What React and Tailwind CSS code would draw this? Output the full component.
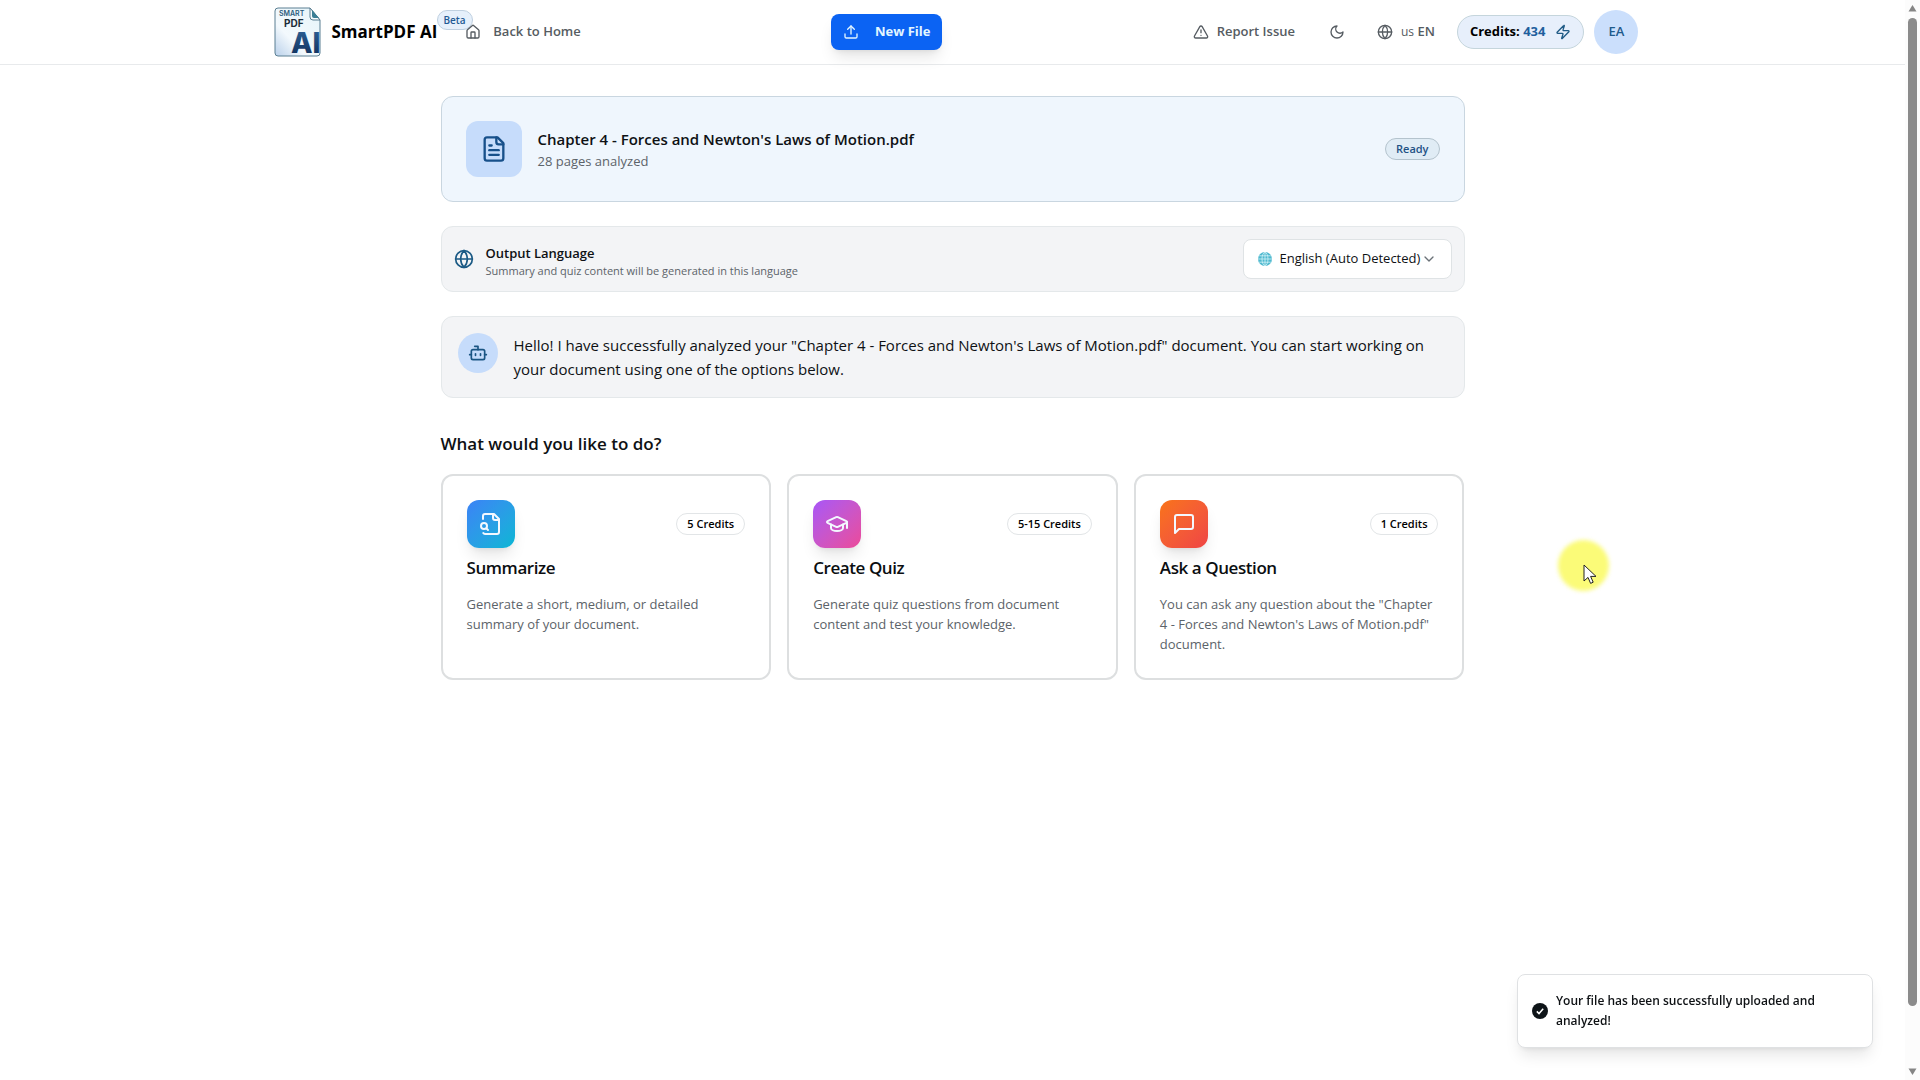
import React, { useState } from 'react';
import { Bot, ChevronDown, Globe, GraduationCap, House, TriangleAlert, Upload, Zap } from 'lucide-react';

const FILE_NAME = "Chapter 4 - Forces and Newton's Laws of Motion.pdf";

const Icon = ({ size = 16, className, children }) => (
  <svg
    width={size}
    height={size}
    viewBox="0 0 24 24"
    fill="none"
    stroke="currentColor"
    strokeWidth="2"
    strokeLinecap="round"
    strokeLinejoin="round"
    className={className}
    aria-hidden="true"
  >
    {children}
  </svg>
);

const MoonIcon = () => (
  <Icon>
    <path d="M12 3a6 6 0 0 0 9 9 9 9 0 1 1-9-9Z" />
  </Icon>
);

const FileTextIcon = () => (
  <Icon size={28}>
    <path d="M15 2H6a2 2 0 0 0-2 2v16a2 2 0 0 0 2 2h12a2 2 0 0 0 2-2V7Z" />
    <path d="M14 2v4a2 2 0 0 0 2 2h4" />
    <path d="M10 9H8" />
    <path d="M16 13H8" />
    <path d="M16 17H8" />
  </Icon>
);

const FileSearchIcon = () => (
  <Icon size={24}>
    <path d="M14 2v4a2 2 0 0 0 2 2h4" />
    <path d="M4.268 21a2 2 0 0 0 1.727 1H18a2 2 0 0 0 2-2V7l-5-5H6a2 2 0 0 0-2 2v3" />
    <path d="m9 18-1.5-1.5" />
    <circle cx="5" cy="14" r="3" />
  </Icon>
);

const MessageIcon = () => (
  <Icon size={24}>
    <path d="M21 15a2 2 0 0 1-2 2H7l-4 4V5a2 2 0 0 1 2-2h14a2 2 0 0 1 2 2z" />
  </Icon>
);

const Logo = () => (
  <svg width="52" height="60" viewBox="0 -4 52 60" aria-hidden="true">
    <defs>
      <linearGradient id="sheet" x1="0" y1="1" x2="1" y2="0">
        <stop offset="0" stopColor="#b9d0ea" />
        <stop offset="0.35" stopColor="#f3f9fd" />
        <stop offset="1" stopColor="#e6f4f9" />
      </linearGradient>
      <linearGradient id="ink" x1="0" y1="0" x2="0" y2="1">
        <stop offset="0" stopColor="#2f669c" />
        <stop offset="1" stopColor="#0c2a55" />
      </linearGradient>
    </defs>
    <path
      d="M4 2h32l10 12v33q0 3-3 3H4q-3 0-3-3V5q0-3 3-3Z"
      fill="url(#sheet)"
      stroke="#5b7f92"
      strokeWidth="1"
    />
    <path d="M36 2v9q0 3 3 3h7Z" fill="#f6fbfd" stroke="#5b7f92" strokeWidth="1" />
    <path d="M38 4v6q0 2 2 2h5Z" fill="#3c7f95" />
    <text x="5" y="10" fontSize="7" fontWeight="600" fontFamily="Inter, sans-serif" fill="#2b5c7c">SMART</text>
    <text x="10" y="21" fontSize="10" fontWeight="700" fontFamily="Inter, sans-serif" fill="#1b2c38">PDF</text>
    <text x="17" y="47" fontSize="28" fontWeight="800" fontFamily="Inter, sans-serif" fill="url(#ink)">AI</text>
  </svg>
);

const GlobeEmoji = () => (
  <svg width="14" height="14" viewBox="0 0 14 14" aria-hidden="true">
    <circle cx="7" cy="7" r="7" fill="#4fb9cf" />
    <g fill="none" stroke="#d3f3f8" strokeWidth="0.8">
      <ellipse cx="7" cy="7" rx="3" ry="6.6" />
      <path d="M7 0v14M0 7h14M1.2 3.8h11.6M1.2 10.2h11.6" />
    </g>
  </svg>
);

const actions = [
  {
    title: 'Summarize',
    credits: '5 Credits',
    text: 'Generate a short, medium, or detailed summary of your document.',
    icon: <FileSearchIcon />,
    color: 'from-[#3b82f6] to-[#06b6d4]',
  },
  {
    title: 'Create Quiz',
    credits: '5-15 Credits',
    text: 'Generate quiz questions from document content and test your knowledge.',
    icon: <GraduationCap size={24} />,
    color: 'from-[#a855f7] to-[#ec4899]',
  },
  {
    title: 'Ask a Question',
    credits: '1 Credits',
    text: `You can ask any question about the "${FILE_NAME}" document.`,
    icon: <MessageIcon />,
    color: 'from-[#f97316] to-[#ef4444]',
  },
];

const Header = () => (
  <header className="border-b border-[#e8eaec] bg-white">
    <div className="mx-auto flex h-16 max-w-[1400px] items-center justify-between pr-[14px] pl-[21px] text-[13px] font-semibold text-[#565c62]">
      <div className="flex items-center">
        <a href="#" className="relative flex items-center gap-[6px] text-black">
          <Logo />
          <span className="text-[17px] font-bold">SmartPDF AI</span>
          <span className="absolute top-2 left-[163px] rounded-full border border-[#bfd0e0] bg-[#e6f0fb] px-[6px] text-[10px] leading-[18px] font-semibold text-[#1f5a94]">
            Beta
          </span>
        </a>
        <a href="#" className="relative ml-7 flex items-center gap-3 pr-2">
          <House size={16} />
          Back to Home
        </a>
      </div>

      <button className="flex h-9 items-center gap-4 rounded-lg bg-[#0b63f3] px-3 font-bold text-[#e3f6ff] shadow-lg">
        <Upload size={16} />
        New File
      </button>

      <div className="flex items-center">
        <button className="flex items-center gap-2 px-2">
          <TriangleAlert size={16} />
          Report Issue
        </button>
        <button className="ml-[18px] p-2" aria-label="Toggle theme">
          <MoonIcon />
        </button>
        <button className="ml-4 flex items-center gap-2 p-2">
          <Globe size={16} />
          <span>
            <span className="text-xs font-normal">us</span> EN
          </span>
        </button>
        <div className="ml-[14px] flex h-[34px] items-center gap-[10px] rounded-full border border-[#c5d5dc] bg-[#e7effb] px-3">
          <span className="font-bold text-black">
            Credits: <span className="text-[#1f5f9e]">434</span>
          </span>
          <Zap size={16} className="text-[#1f5a85]" />
        </div>
        <button className="ml-[10px] size-11 rounded-full bg-[#cbdffc] text-[#1f5a8c]">EA</button>
      </div>
    </div>
  </header>
);

const ActionCard = ({ title, credits, text, icon, color }) => (
  <button className="flex flex-col rounded-xl border-2 border-[#dddfe0] bg-white p-6 text-left">
    <span className="flex w-full items-center justify-between">
      <span className={`flex size-12 items-center justify-center rounded-xl bg-linear-to-br text-[#f3f8ff] shadow-lg ${color}`}>
        {icon}
      </span>
      <span className="rounded-full border border-[#e2e5e7] px-[10px] text-[11px] leading-5 font-semibold text-black">
        {credits}
      </span>
    </span>
    <span className="mt-[6px] text-[17px] leading-7 font-semibold tracking-tight text-[#0b0e11]">{title}</span>
    <span className="mt-3 text-[13px] leading-5 text-[#5c6369]">{text}</span>
  </button>
);

const Scrollbar = () => (
  <div className="fixed inset-y-0 right-0 flex w-[15px] flex-col items-center justify-between bg-[#fcfcfc] py-1" aria-hidden="true">
    <svg width="9" height="8" viewBox="0 0 9 8">
      <path d="M4.5 1 8.5 7.5h-8Z" fill="#858585" />
    </svg>
    <div className="mt-[6px] w-[9px] grow-[16] rounded-full bg-[#8b8b8b]" />
    <div className="grow" />
    <svg width="9" height="8" viewBox="0 0 9 8">
      <path d="M4.5 7 .5 .5h8Z" fill="#858585" />
    </svg>
  </div>
);

const App = () => {
  const [language, setLanguage] = useState('auto');

  return (
    <div className="min-h-screen bg-white pr-[15px] font-['Open_Sans','Noto_Sans',sans-serif] text-[#0e1114]">
      <Header />

      <main className="mx-auto max-w-5xl pt-[31px] pb-8">
        <section className="flex items-center gap-4 rounded-xl border border-[#c9d6e0] bg-[#eff6fd] p-6">
          <div className="flex size-14 items-center justify-center rounded-xl bg-[#c6dcfb] text-[#17508a]">
            <FileTextIcon />
          </div>
          <div className="grow">
            <h1 className="text-[15px] leading-6 font-semibold">{FILE_NAME}</h1>
            <p className="text-[13px] leading-5 text-[#5c6369]">28 pages analyzed</p>
          </div>
          <span className="rounded-full border border-[#b4c3cd] bg-[#e0ecf5] px-[10px] text-[11px] leading-5 font-semibold text-[#1f5285]">
            Ready
          </span>
        </section>

        <section className="mt-6 flex items-center gap-3 rounded-xl border border-[#e4e8ea] bg-[#f3f4f6] p-3">
          <Globe size={20} className="text-[#1b5a85]" />
          <div className="grow pt-1">
            <label htmlFor="language" className="block text-[13px] leading-5 font-semibold">
              Output Language
            </label>
            <p className="text-[11px] leading-4 text-[#5c6369]">Summary and quiz content will be generated in this language</p>
          </div>
          <div className="flex h-10 items-center gap-2 rounded-lg border border-[#dfe3e5] bg-white px-[14px] text-[13px]">
            <GlobeEmoji />
            <div className="flex items-center">
              <select
                id="language"
                value={language}
                onChange={(e) => setLanguage(e.target.value)}
                className="appearance-none bg-transparent focus:outline-none"
              >
                <option value="auto">English (Auto Detected)</option>
              </select>
              <ChevronDown size={16} className="text-[#6a7177]" />
            </div>
          </div>
        </section>

        <section className="mt-6 flex items-start gap-4 rounded-xl border border-[#e4e8ea] bg-[#f3f4f6] p-4">
          <div className="flex size-10 shrink-0 items-center justify-center rounded-full bg-[#c6dcfb] text-[#1b5583]">
            <Bot size={20} />
          </div>
          <p className="text-[15px] leading-6">
            {`Hello! I have successfully analyzed your "${FILE_NAME}" document. You can start working on your document using one of the options below.`}
          </p>
        </section>

        <h2 className="mt-8 text-[17px] leading-7 font-semibold">What would you like to do?</h2>
        <div className="mt-4 grid grid-cols-3 gap-4">
          {actions.map((action) => (
            <ActionCard key={action.title} {...action} />
          ))}
        </div>
      </main>

      <div
        role="status"
        className="fixed right-[47px] bottom-8 flex w-[356px] items-center gap-2 rounded-lg border border-[#dfe1e3] bg-white px-[14px] py-4 text-xs leading-5 font-semibold shadow-lg"
      >
        <svg width="16" height="16" viewBox="0 0 16 16" className="shrink-0" aria-hidden="true">
          <circle cx="8" cy="8" r="8" fill="#0e1418" />
          <path d="m4.8 8.4 2.2 2.2 4.2-4.8" fill="none" stroke="#fff" strokeWidth="1.5" />
        </svg>
        Your file has been successfully uploaded and analyzed!
      </div>

      {/* mouse pointer with its highlight */}
      <div className="pointer-events-none fixed top-[540px] left-[1558px] size-[51px] rounded-full bg-[#fbfb78] blur-[2px]" />
      <svg className="pointer-events-none fixed top-[564px] left-[1583px]" width="14" height="21" viewBox="0 0 14 21" aria-hidden="true">
        <path d="M1 1v16l4-3.6 2.6 6 2.6-1.2-2.6-5.8H13Z" fill="#fff" stroke="#222" strokeWidth="1" />
      </svg>

      <Scrollbar />
    </div>
  );
};

export default App;
